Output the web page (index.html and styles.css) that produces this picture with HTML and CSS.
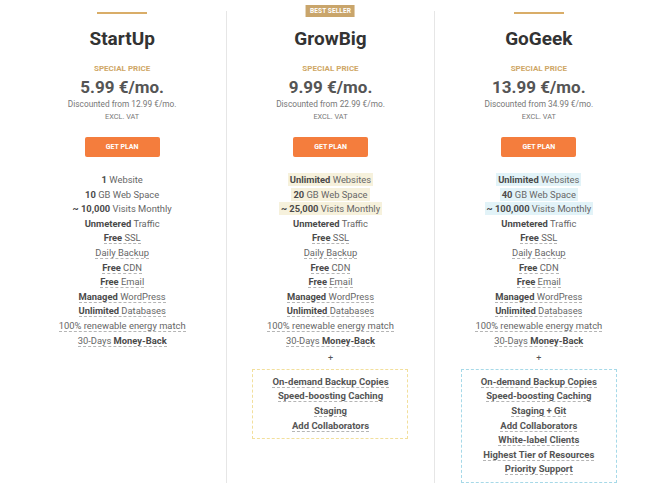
FILE: index.html
```html
<!DOCTYPE html>
<html lang="en">
<head>
<meta charset="utf-8">
<title>Plans</title>
<link rel="stylesheet" href="styles.css">
</head>
<body>
<div class="plans">
  <div class="plan">
    <div class="bar"></div>
    <h2 class="name">StartUp</h2>
    <div class="special">SPECIAL PRICE</div>
    <div class="price">5.99 €/mo.</div>
    <div class="disc">Discounted from 12.99 €/mo.</div>
    <div class="vat">EXCL. VAT</div>
    <a class="btn" href="#">GET PLAN</a>
    <ul class="features">
      <li><span><b>1</b> Website</span></li>
      <li><span><b>10</b> GB Web Space</span></li>
      <li><span><b>~ 10,000</b> Visits Monthly</span></li>
      <li><span><b>Unmetered</b> Traffic</span></li>
      <li><span class="ul"><b>Free</b> SSL</span></li>
      <li><span class="ul">Daily Backup</span></li>
      <li><span class="ul"><b>Free</b> CDN</span></li>
      <li><span class="ul"><b>Free</b> Email</span></li>
      <li><span class="ul"><b>Managed</b> WordPress</span></li>
      <li><span class="ul"><b>Unlimited</b> Databases</span></li>
      <li><span class="ul">100% renewable energy match</span></li>
      <li><span class="ul">30-Days <b>Money-Back</b></span></li>
    </ul>
  </div>

  <div class="plan featured">
    <span class="badge">BEST SELLER</span>
    <div class="bar hidden"></div>
    <h2 class="name">GrowBig</h2>
    <div class="special">SPECIAL PRICE</div>
    <div class="price">9.99 €/mo.</div>
    <div class="disc">Discounted from 22.99 €/mo.</div>
    <div class="vat">EXCL. VAT</div>
    <a class="btn" href="#">GET PLAN</a>
    <ul class="features">
      <li><span class="hl-gold"><b>Unlimited</b> Websites</span></li>
      <li><span class="hl-gold"><b>20</b> GB Web Space</span></li>
      <li><span class="hl-gold"><b>~ 25,000</b> Visits Monthly</span></li>
      <li><span><b>Unmetered</b> Traffic</span></li>
      <li><span class="ul"><b>Free</b> SSL</span></li>
      <li><span class="ul">Daily Backup</span></li>
      <li><span class="ul"><b>Free</b> CDN</span></li>
      <li><span class="ul"><b>Free</b> Email</span></li>
      <li><span class="ul"><b>Managed</b> WordPress</span></li>
      <li><span class="ul"><b>Unlimited</b> Databases</span></li>
      <li><span class="ul">100% renewable energy match</span></li>
      <li><span class="ul">30-Days <b>Money-Back</b></span></li>
    </ul>
    <div class="plus">+</div>
    <ul class="extras extras-gold">
      <li><span class="ul">On-demand Backup Copies</span></li>
      <li><span class="ul">Speed-boosting Caching</span></li>
      <li><span class="ul">Staging</span></li>
      <li><span class="ul">Add Collaborators</span></li>
    </ul>
  </div>

  <div class="plan">
    <div class="bar"></div>
    <h2 class="name">GoGeek</h2>
    <div class="special">SPECIAL PRICE</div>
    <div class="price">13.99 €/mo.</div>
    <div class="disc">Discounted from 34.99 €/mo.</div>
    <div class="vat">EXCL. VAT</div>
    <a class="btn" href="#">GET PLAN</a>
    <ul class="features">
      <li><span class="hl-blue"><b>Unlimited</b> Websites</span></li>
      <li><span class="hl-blue"><b>40</b> GB Web Space</span></li>
      <li><span class="hl-blue"><b>~ 100,000</b> Visits Monthly</span></li>
      <li><span><b>Unmetered</b> Traffic</span></li>
      <li><span class="ul"><b>Free</b> SSL</span></li>
      <li><span class="ul">Daily Backup</span></li>
      <li><span class="ul"><b>Free</b> CDN</span></li>
      <li><span class="ul"><b>Free</b> Email</span></li>
      <li><span class="ul"><b>Managed</b> WordPress</span></li>
      <li><span class="ul"><b>Unlimited</b> Databases</span></li>
      <li><span class="ul">100% renewable energy match</span></li>
      <li><span class="ul">30-Days <b>Money-Back</b></span></li>
    </ul>
    <div class="plus">+</div>
    <ul class="extras extras-blue">
      <li><span class="ul">On-demand Backup Copies</span></li>
      <li><span class="ul">Speed-boosting Caching</span></li>
      <li><span class="ul">Staging + Git</span></li>
      <li><span class="ul">Add Collaborators</span></li>
      <li><span class="ul">White-label Clients</span></li>
      <li><span class="ul">Highest Tier of Resources</span></li>
      <li><span class="ul">Priority Support</span></li>
    </ul>
  </div>
</div>
</body>
</html>
```

FILE: styles.css
```css
* { box-sizing: border-box; }

html, body {
  margin: 0;
  background: #ffffff;
}

body {
  font-family: Roboto, "Liberation Sans", Arial, sans-serif;
  color: #555;
}

.plans {
  display: grid;
  grid-template-columns: repeat(3, 1fr);
  padding: 11px 8px 0 18px;
}

.plan {
  display: flex;
  flex-direction: column;
  align-items: center;
  text-align: center;
  position: relative;
}

.plan.featured {
  border-left: 1px solid #e6e6e6;
  border-right: 1px solid #e6e6e6;
}

.badge {
  position: absolute;
  top: -6px;
  left: 50%;
  transform: translateX(-50%);
  background: #c9a56b;
  color: #fff;
  font-size: 6.5px;
  font-weight: 700;
  line-height: 12px;
  padding: 0 4px;
  white-space: nowrap;
  letter-spacing: 0.1px;
}

.bar {
  width: 50px;
  height: 2px;
  margin-top: 1px;
  background: #d9ad68;
}

.bar.hidden { visibility: hidden; }

.name {
  margin: 14px 0 0;
  font-size: 19px;
  line-height: 22px;
  font-weight: 700;
  color: #333;
}

.special {
  margin-top: 14px;
  font-size: 8px;
  line-height: 10px;
  font-weight: 700;
  color: #cfa766;
}

.price {
  margin-top: 3px;
  font-size: 17px;
  line-height: 20px;
  font-weight: 700;
  color: #555;
}

.disc {
  margin-top: 2px;
  font-size: 8.3px;
  line-height: 10px;
  color: #777;
}

.vat {
  margin-top: 3px;
  font-size: 7.3px;
  line-height: 10px;
  color: #777;
}

.btn {
  margin-top: 15px;
  width: 75px;
  height: 20px;
  display: flex;
  align-items: center;
  justify-content: center;
  background: #f47d3d;
  border-radius: 2px;
  color: #fff;
  font-size: 7px;
  font-weight: 700;
  text-decoration: none;
}

.features, .extras {
  list-style: none;
  margin: 0;
  padding: 0;
}

.features {
  margin-top: 16px;
}

.features li, .extras li {
  font-size: 9.4px;
  line-height: 14.6px;
  white-space: nowrap;
}

.extras li { font-size: 9.5px; }

.features li { color: #666; }

.features b {
  font-weight: 700;
  color: #4a4a4a;
}

.ul {
  border-bottom: 1px dashed #b5b5b5;
}

.hl-gold { background: #f6f1dc; padding: 1px 2px; }
.hl-blue { background: #e2f3f8; padding: 1px 2px; }

.plus {
  margin-top: 3px;
  font-size: 9px;
  line-height: 14.6px;
  color: #555;
}

.extras {
  margin-top: 3px;
  width: 156px;
  padding: 5px 0;
}

.extras li {
  font-weight: 700;
  color: #555;
}

.extras-gold { border: 1px dashed #f2df9c; }
.extras-blue { border: 1px dashed #a6d9e8; }
```
